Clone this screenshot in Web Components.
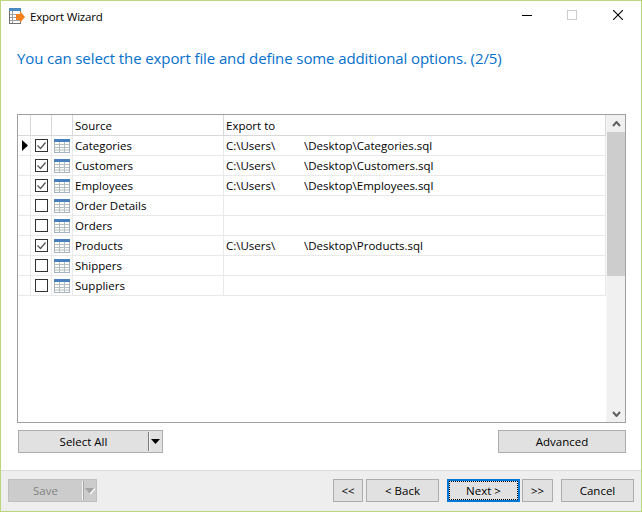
<!DOCTYPE html>
<html>
<head>
<meta charset="utf-8">
<title>Export Wizard</title>
<style>
  html, body { margin: 0; padding: 0; background: #fff; }
  body { font: 11.5px "Open Sans", "Liberation Sans", sans-serif; color: #000; }
</style>
</head>
<body>
<wizard-window>
  <title-bar slot="title">Export Wizard</title-bar>
  <span slot="heading">You can select the export file and define some additional options. (2/5)</span>
  <export-grid slot="grid"></export-grid>
  <wiz-button slot="left" w="145" split>Select All</wiz-button>
  <wiz-button slot="right" w="128">Advanced</wiz-button>
  <wiz-button slot="save" w="89" split disabled>Save</wiz-button>
  <wiz-button slot="nav" w="30">&lt;&lt;</wiz-button>
  <wiz-button slot="nav" w="73" style="margin-left:3px">&lt; Back</wiz-button>
  <wiz-button slot="nav" w="73" focused style="margin-left:8px">Next &gt;</wiz-button>
  <wiz-button slot="nav" w="31" style="margin-left:2px">&gt;&gt;</wiz-button>
  <wiz-button slot="nav" w="73" style="margin-left:8px">Cancel</wiz-button>
</wizard-window>

<script>
(() => {
  class WizardWindow extends HTMLElement {
    constructor() {
      super();
      this.attachShadow({ mode: 'open' }).innerHTML = `
        <style>
          :host {
            display: flex;
            flex-direction: column;
            box-sizing: border-box;
            width: 642px;
            height: 512px;
            border: 1px solid #b9d77d;
            background: #fff;
            overflow: hidden;
          }
          .heading {
            height: 83px;
            padding: 16px 0 0 16px;
            box-sizing: border-box;
            font-size: 15px;
            letter-spacing: -0.1px;
            line-height: 22px;
            color: #0670cc;
            white-space: nowrap;
          }
          .grid { padding: 0 16px; }
          .actions {
            display: flex;
            justify-content: space-between;
            padding: 7px 15px 0 17px;
            height: 47px;
            box-sizing: border-box;
          }
          .footer {
            flex: 1;
            display: flex;
            justify-content: space-between;
            padding: 8px 7px 0 7px;
            background: #eeeeee;
            border-top: 1px solid #dcdcdc;
          }
          .nav { display: flex; }
        </style>
        <slot name="title"></slot>
        <div class="heading"><slot name="heading"></slot></div>
        <div class="grid"><slot name="grid"></slot></div>
        <div class="actions"><slot name="left"></slot><slot name="right"></slot></div>
        <div class="footer"><slot name="save"></slot><div class="nav"><slot name="nav"></slot></div></div>
      `;
    }
  }

  class TitleBar extends HTMLElement {
    constructor() {
      super();
      this.attachShadow({ mode: 'open' }).innerHTML = `
        <style>
          :host { display: flex; align-items: center; height: 30px; flex: none; }
          .logo { margin-left: 8px; width: 16px; height: 16px; flex: none; }
          .name { margin-left: 5px; letter-spacing: -0.2px; flex: 1; }
          .ctl { width: 46px; height: 28px; margin-bottom: 2px; display: flex; align-items: center; justify-content: center; flex: none; }
        </style>
        <svg class="logo" viewBox="0 0 16 16">
          <rect x="0.5" y="0.5" width="11" height="15" fill="#fff" stroke="#707070"/>
          <rect x="0" y="0" width="12" height="3" fill="#4a8ac0"/>
          <path d="M3.5 3v12M1 6.5h10M1 9.5h10M1 12.5h10" stroke="#a0a0a0" fill="none"/>
          <path d="M7 6h4V3l5 6-5 6v-3H7z" fill="#f5821f"/>
        </svg>
        <span class="name"><slot></slot></span>
        <span class="ctl" style="width:44px"><svg width="10" height="10"><path d="M0 5.5h10" stroke="#000"/></svg></span>
        <span class="ctl"><svg width="10" height="10"><rect x=".5" y=".5" width="9" height="9" fill="none" stroke="#ccc"/></svg></span>
        <span class="ctl"><svg width="10" height="10"><path d="M0 0l10 10M10 0L0 10" stroke="#000" stroke-width="1.1"/></svg></span>
      `;
    }
  }

  class WizButton extends HTMLElement {
    constructor() {
      super();
      const w = this.getAttribute('w');
      const split = this.hasAttribute('split');
      const arrow = this.hasAttribute('disabled')
        ? '<path d="M0 0h10L5 6z" fill="#a3a3a3"/><path d="M10 0.5L5 6" stroke="#fff" stroke-width="1.4" fill="none"/>'
        : '<path d="M0 0h9L4.5 5z" fill="#000"/>';
      this.attachShadow({ mode: 'open' }).innerHTML = `
        <style>
          :host {
            display: flex;
            box-sizing: border-box;
            width: ${w}px;
            height: 23px;
            flex: none;
            border: 1px solid #adadad;
            background: #e1e1e1;
            color: #000;
          }
          :host([disabled]) { background: #cccccc; border-color: #bfbfbf; color: #838383; }
          :host([focused]) { border: 2px solid #0078d7; }
          .label { flex: 1; display: flex; align-items: center; justify-content: center; line-height: 1; }
          :host([focused]) .label { outline: 1px dotted #000; outline-offset: -1px; }
          .arrow { width: 14px; display: flex; align-items: center; }
          .arrow::before { content: ""; width: 2px; height: 19px; flex: none; background: linear-gradient(90deg, #7c7c7c 50%, #f2f2f2 50%); }
          :host([disabled]) .arrow::before { background: linear-gradient(90deg, #f4f4f4 50%, #a8a8a8 50%); }
          .arrow svg { margin-left: 1px; }
        </style>
        <span class="label"><slot></slot></span>
        ${split ? `<span class="arrow"><svg width="10" height="6">${arrow}</svg></span>` : ''}
      `;
    }
  }

  const ROWS = [
    ['Categories', true],
    ['Customers', true],
    ['Employees', true],
    ['Order Details', false],
    ['Orders', false],
    ['Products', true],
    ['Shippers', false],
    ['Suppliers', false],
  ];

  const TABLE_ICON = `<svg width="16" height="14" viewBox="0 0 16 14">
      <rect x="0.5" y="0.5" width="15" height="13" fill="#fdfdf8" stroke="#a9b4c0"/>
      <rect x="0" y="0" width="16" height="3" fill="#4a7fbf"/>
      <path d="M5.5 3v10M10.5 3v10M1 5.5h14M1 8.5h14M1 11h14" stroke="#b4bdc6" fill="none"/>
    </svg>`;

  const CHECK = `<svg width="13" height="13"><rect x=".5" y=".5" width="12" height="12" fill="#fff" stroke="#333"/><path d="M2.5 6.5l3 3 5-6" stroke="#555" fill="none" stroke-width="1.3"/></svg>`;
  const BOX = `<svg width="13" height="13"><rect x=".5" y=".5" width="12" height="12" fill="#fff" stroke="#333"/></svg>`;

  class ExportGrid extends HTMLElement {
    constructor() {
      super();
      const rows = ROWS.map(([name, on], i) => `
        <div class="row">
          <div class="c ind">${i === 0 ? '<svg width="6" height="11"><path d="M0 0l6 5.5L0 11z"/></svg>' : ''}</div>
          <div class="c mid">${on ? CHECK : BOX}</div>
          <div class="c mid">${TABLE_ICON}</div>
          <div class="c src">${name}</div>
          <div class="c exp">${on ? `<span class="p1">C:\\Users\\</span><span>\\Desktop\\${name}.sql</span>` : ''}</div>
        </div>`).join('');
      this.attachShadow({ mode: 'open' }).innerHTML = `
        <style>
          :host {
            display: flex;
            box-sizing: border-box;
            width: 609px;
            height: 309px;
            border: 1px solid #a0a0a0;
            background: #fff;
          }
          .table { flex: 1; min-width: 0; }
          .row { display: grid; grid-template-columns: 13px 21px 21px 151px 1fr; height: 20px; box-sizing: border-box; border-bottom: 1px solid #e9e9e9; }
          .row.head { height: 21px; border-bottom: 1px solid #d8d8d8; }
          .c { box-sizing: border-box; border-right: 1px solid #e9e9e9; display: flex; align-items: center; white-space: nowrap; overflow: hidden; }
          .head .c { border-right-color: #d8d8d8; }
          .head .src, .head .exp { padding-top: 1px; }
          .mid { justify-content: center; }
          .src, .exp { padding-left: 2px; }
          .ind { padding-left: 4px; }
          .p1 { width: 78px; flex: none; }
          .bar { width: 18px; flex: none; display: flex; flex-direction: column; background: #f0f0f0; border-left: 1px solid #f6f6f6; }
          .btn { height: 17px; display: flex; align-items: center; justify-content: center; flex: none; }
          .thumb { height: 144px; background: #cdcdcd; flex: none; }
          .track { flex: 1; }
        </style>
        <div class="table">
          <div class="row head">
            <div class="c"></div><div class="c"></div><div class="c"></div>
            <div class="c src">Source</div><div class="c exp">Export to</div>
          </div>
          ${rows}
        </div>
        <div class="bar">
          <div class="btn"><svg width="9" height="6"><path d="M1 5l3.5-4L8 5" fill="none" stroke="#606060" stroke-width="2"/></svg></div>
          <div class="thumb"></div>
          <div class="track"></div>
          <div class="btn"><svg width="9" height="6"><path d="M1 1l3.5 4L8 1" fill="none" stroke="#606060" stroke-width="2"/></svg></div>
        </div>
      `;
    }
  }

  customElements.define('wizard-window', WizardWindow);
  customElements.define('title-bar', TitleBar);
  customElements.define('wiz-button', WizButton);
  customElements.define('export-grid', ExportGrid);
})();
</script>
</body>
</html>
